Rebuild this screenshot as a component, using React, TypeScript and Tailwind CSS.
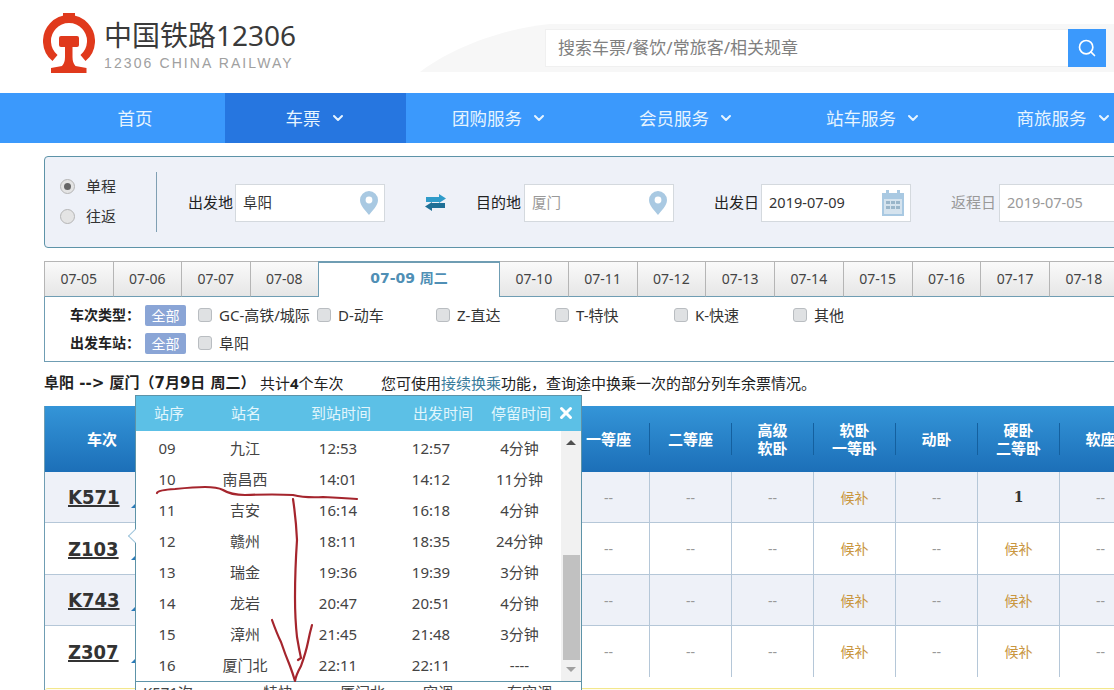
import { ChevronDown, Search, X } from "lucide-react";

const navItems = [
  { label: "首页", width: "w-[225px]", arrow: false },
  { label: "车票", width: "w-[181px]", arrow: true, active: true },
  { label: "团购服务", width: "w-[187px]", arrow: true },
  { label: "会员服务", width: "w-[187px]", arrow: true },
  { label: "站车服务", width: "w-[187px]", arrow: true },
  { label: "商旅服务", width: "w-[194px]", arrow: true },
];

const leftDates = ["07-05", "07-06", "07-07", "07-08"];
const rightDates = ["07-10", "07-11", "07-12", "07-13", "07-14", "07-15", "07-16", "07-17", "07-18"];

const trainTypes = ["GC-高铁/城际", "D-动车", "Z-直达", "T-特快", "K-快速", "其他"];

const seatHeaders = [
  ["一等座"],
  ["二等座"],
  ["高级", "软卧"],
  ["软卧", "一等卧"],
  ["动卧"],
  ["硬卧", "二等卧"],
  ["软座"],
];

const trains = [
  { code: "K571", soft: "候补", hard: "1", height: "h-[51px]", stripe: true },
  { code: "Z103", soft: "候补", hard: "候补", height: "h-[52px]", stripe: false },
  { code: "K743", soft: "候补", hard: "候补", height: "h-[51px]", stripe: true },
  { code: "Z307", soft: "候补", hard: "候补", height: "h-[51px]", stripe: false },
];

const stops = [
  ["09", "九江", "12:53", "12:57", "4分钟"],
  ["10", "南昌西", "14:01", "14:12", "11分钟"],
  ["11", "吉安", "16:14", "16:18", "4分钟"],
  ["12", "赣州", "18:11", "18:35", "24分钟"],
  ["13", "瑞金", "19:36", "19:39", "3分钟"],
  ["14", "龙岩", "20:47", "20:51", "4分钟"],
  ["15", "漳州", "21:45", "21:48", "3分钟"],
  ["16", "厦门北", "22:11", "22:11", "----"],
];

function Logo() {
  return (
    <svg viewBox="0 0 52 60" className="w-[52px] h-[60px] shrink-0">
      <path d="M12 45A22 22 0 1 1 40 45" fill="none" stroke="#e0391c" strokeWidth="8" />
      <path d="M20 0h12v5H20z" fill="#e0391c" />
      <path
        d="M18 23h16a2 2 0 0 1 2 2v7a2 2 0 0 1-2 2h-4.5v10q0 6 3 9l11 2v5H8v-5l11-2q3-3 3-9V34h-4a2 2 0 0 1-2-2v-7a2 2 0 0 1 2-2z"
        fill="#e0391c"
      />
    </svg>
  );
}

function Pin() {
  return (
    <svg viewBox="0 0 20 26" className="w-[20px] h-[26px]">
      <path d="M10 1a9 9 0 0 0-9 9c0 6 6 11 9 15 3-4 9-9 9-15a9 9 0 0 0-9-9z" fill="#a9c9e2" />
      <circle cx="10" cy="10" r="3.4" fill="#fff" />
    </svg>
  );
}

function CalendarIcon() {
  return (
    <svg viewBox="0 0 24 26" className="w-[24px] h-[26px]">
      <path d="M1 3h4V0h3v3h8V0h3v3h4v23H1z" fill="#a9c9e2" />
      <path d="M3 9h18v15H3z" fill="#d5e3ee" />
      <path d="M5 11h4v3H5zM10 11h4v3h-4zM15 11h4v3h-4zM5 16h4v3H5zM10 16h4v3h-4zM15 16h4v3h-4z" fill="#9ab6ca" />
    </svg>
  );
}

function SwapIcon() {
  return (
    <svg viewBox="0 0 21 17" className="w-[21px] h-[17px] block">
      <path d="M1 3h13V0l7 4.5L14 9V8H1z" fill="#2f9bc9" />
      <path d="M20 9v5H7v3L0 12.5 7 8v1z" fill="#1e6f96" />
    </svg>
  );
}

function Field({ value, muted, icon, width }: { value: string; muted?: boolean; icon?: React.ReactNode; width: string }) {
  return (
    <div className={`${width} h-[38px] mt-[2px] bg-white border border-[#d4d9de] flex items-center justify-between pl-[7px] pr-[5px] shrink-0`}>
      <span className={`text-[14.5px] ${muted ? "text-[#999]" : "text-[#333]"}`}>{value}</span>
      {icon}
    </div>
  );
}

function CheckItem({ label, width }: { label: string; width: string }) {
  return (
    <div className={`${width} flex items-center gap-[7px] shrink-0`}>
      <span className="w-[14px] h-[14px] rounded-[3px] bg-[#dfe1e3] border border-[#b9bdc1]" />
      <span className="text-[15px] text-[#333] leading-none">{label}</span>
    </div>
  );
}

function Corner() {
  return <span className="absolute left-[86px] bottom-[14px] w-0 h-0 border-b-[6px] border-l-[6px] border-b-[#2a7ab8] border-l-transparent" />;
}

export default function App() {
  return (
    <div className="relative w-[1114px] h-[690px] overflow-hidden bg-white text-[#333] font-['Noto_Sans','Noto_Sans_CJK_SC',sans-serif]">
      {/* Header */}
      <header className="relative h-[93px] flex items-start pl-[43px]">
        <svg viewBox="0 0 694 48" className="absolute left-[420px] top-[24px] w-[694px] h-[48px]">
          <path d="M0 48C30 25 80 5 130 0H694V48z" fill="#f7f7f7" />
        </svg>
        <div className="mt-[13px]">
          <Logo />
        </div>
        <div className="ml-[9px] mt-[17px]">
          <div className="text-[28px] leading-[36px] text-[#3a3a3a] whitespace-nowrap">中国铁路12306</div>
          <div className="mt-[1px] text-[14px] leading-[18px] tracking-[2.1px] text-[#a0a0a0] whitespace-nowrap font-['Liberation_Sans',sans-serif]">12306 CHINA RAILWAY</div>
        </div>
        <div className="relative ml-auto mr-[8px] mt-[29px] flex">
          <div className="w-[523px] h-[38px] bg-white border-y border-l border-[#f0f0f0] flex items-center pl-[12px] text-[17px] text-[#808080]">
            搜索车票/餐饮/常旅客/相关规章
          </div>
          <div className="w-[38px] h-[38px] bg-[#3b99fc] flex items-center justify-center">
            <Search className="w-[20px] h-[20px] text-white" strokeWidth={2} />
          </div>
        </div>
      </header>

      {/* Nav */}
      <nav className="flex h-[50px] bg-[#3b99fc]">
        {navItems.map((item) => (
          <div
            key={item.label}
            className={`${item.width} shrink-0 flex items-center justify-center gap-[9px] text-[17.5px] text-[#e6f4ff] ${item.active ? "bg-[#2676e0]" : ""} ${item.label === "首页" ? "pl-[45px]" : ""}`}
          >
            {item.label}
            {item.arrow && <ChevronDown className="w-[16px] h-[16px]" strokeWidth={3} />}
          </div>
        ))}
      </nav>

      <main className="ml-[44px] w-[1200px]">
        {/* Query panel */}
        <section className="mt-[13px] h-[92px] bg-[#eef1f8] border border-[#5d93a8] rounded-[4px] flex items-center">
          <div className="w-[112px] pl-[15px] pb-[2px] h-[60px] border-r border-[#7f9fb3] flex flex-col justify-center gap-[10px] shrink-0">
            <label className="flex items-center gap-[11px] text-[15px] leading-[20px]">
              <span className="w-[15px] h-[15px] rounded-full bg-[#e4e4e4] border border-[#b5b5b5] flex items-center justify-center">
                <span className="w-[7px] h-[7px] rounded-full bg-[#666]" />
              </span>
              单程
            </label>
            <label className="flex items-center gap-[11px] text-[15px] leading-[20px]">
              <span className="w-[15px] h-[15px] rounded-full bg-[#e4e4e4] border border-[#b5b5b5]" />
              往返
            </label>
          </div>
          <span className="ml-[31px] mr-[2px] text-[15px] text-[#222] whitespace-nowrap">出发地</span>
          <Field value="阜阳" width="w-[150px]" icon={<Pin />} />
          <span className="ml-[40px]"><SwapIcon /></span>
          <span className="ml-[30px] mr-[3px] text-[15px] text-[#222] whitespace-nowrap">目的地</span>
          <Field value="厦门" muted width="w-[150px]" icon={<Pin />} />
          <span className="ml-[40px] mr-[2px] text-[15px] text-[#222] whitespace-nowrap">出发日</span>
          <Field value="2019-07-09" width="w-[150px]" icon={<CalendarIcon />} />
          <span className="ml-[40px] mr-[3px] text-[15px] text-[#999] whitespace-nowrap">返程日</span>
          <Field value="2019-07-05" muted width="w-[150px]" />
        </section>

        {/* Date tabs */}
        <div className="mt-[13px] h-[36px] flex items-stretch">
          {leftDates.map((d) => (
            <div key={d} className="w-[68.5px] shrink-0 pb-[1px] flex items-center justify-center text-[14px] text-[#444] bg-gradient-to-b from-[#fafafa] to-[#e6e6e6] border-t border-l border-b border-t-[#b5b5b5] border-l-[#b5b5b5] border-b-[#6f9db3]">
              {d}
            </div>
          ))}
          <div className="w-[182px] shrink-0 flex items-start justify-center pt-[5px] text-[14px] font-bold text-[#4f8fb5] bg-white border-t-2 border-x border-[#6f9db3] font-['DejaVu_Sans','Noto_Sans_CJK_SC',sans-serif]">
            07-09 周二
          </div>
          {rightDates.map((d) => (
            <div key={d} className="w-[68.75px] shrink-0 pb-[1px] flex items-center justify-center text-[14px] text-[#444] bg-gradient-to-b from-[#fafafa] to-[#e6e6e6] border-t border-r border-b border-t-[#b5b5b5] border-r-[#b5b5b5] border-b-[#6f9db3]">
              {d}
            </div>
          ))}
        </div>

        {/* Filters */}
        <section className="h-[65px] border-x border-b border-[#6f9db3] pl-[25px] pt-[7px] flex flex-col gap-[6px]">
          <div className="flex items-center h-[22px]">
            <span className="w-[75px] pb-[1px] text-[14px] font-bold text-[#222] shrink-0">车次类型：</span>
            <span className="w-[41px] h-[21px] mr-[12px] bg-[#8aa5d6] text-white text-[14px] flex items-center justify-center rounded-[2px] shrink-0">全部</span>
            {trainTypes.map((t) => (
              <CheckItem key={t} label={t} width="w-[119px]" />
            ))}
          </div>
          <div className="flex items-center h-[22px]">
            <span className="w-[75px] pb-[1px] text-[14px] font-bold text-[#222] shrink-0">出发车站：</span>
            <span className="w-[41px] h-[21px] mr-[12px] bg-[#8aa5d6] text-white text-[14px] flex items-center justify-center rounded-[2px] shrink-0">全部</span>
            <CheckItem label="阜阳" width="w-[119px]" />
          </div>
        </section>

        {/* Result summary */}
        <div className="mt-[11px] h-[20px] flex items-center text-[15px] text-[#222] whitespace-nowrap">
          <span className="w-[216px] font-bold font-['DejaVu_Sans','Noto_Sans_CJK_SC',sans-serif]">阜阳 --&gt; 厦门（7月9日 周二）</span>
          <span className="w-[83px]">共计<b>4</b>个车次</span>
          <span className="ml-[38px]">
            您可使用<span className="text-[#3b7c9c]">接续换乘</span>功能，查询途中换乘一次的部分列车余票情况。
          </span>
        </div>

        {/* Results table */}
        <section className="mt-[13px] border-l border-[#6f9db3]">
          <div className="h-[66px] flex items-center bg-gradient-to-b from-[#3495d8] to-[#1c6fb8] text-white text-[15px] font-bold">
            <div className="w-[523px] pl-[42px] shrink-0">车次</div>
            {seatHeaders.map((h) => (
              <div key={h[0]} className="w-[82px] h-[32px] shrink-0 border-r border-[#14609f] flex flex-col items-center justify-center leading-[18px]">
                {h.map((line) => (
                  <span key={line}>{line}</span>
                ))}
              </div>
            ))}
          </div>
          {trains.map((train) => (
            <div key={train.code} className={`${train.height} flex ${train.code === "Z307" ? "" : "border-b border-[#b5c7d8]"} ${train.stripe ? "bg-[#eef1f8]" : "bg-white"}`}>
              <div className="relative w-[523px] shrink-0 pl-[23px] flex items-center">
                <span className="text-[20px] font-bold underline text-[#333] font-['DejaVu_Sans_Condensed','DejaVu_Sans',sans-serif]">{train.code}</span>
                <Corner />
              </div>
              {seatHeaders.map((h, i) => {
                const value = i === 3 ? train.soft : i === 5 ? train.hard : "--";
                return (
                  <div
                    key={h[0]}
                    className={`w-[82px] shrink-0 border-r border-[#b5c7d8] flex items-center justify-center text-[14px] ${value === "候补" ? "text-[#c9963f]" : value === "1" ? "font-bold text-[#333] font-['DejaVu_Serif',serif]" : "text-[#999]"}`}
                  >
                    {value}
                  </div>
                );
              })}
            </div>
          ))}
          <div className="mt-[11px] h-[20px] bg-[#fffdf0] border-t border-[#f3e78c] rounded-t-[3px]" />
        </section>
      </main>

      {/* Stop list popup */}
      <div className="absolute left-[135px] top-[395px] w-[447px] h-[310px] bg-white border border-[#5d93a8]">
        <span className="absolute left-[-6px] top-[135px] w-[10px] h-[10px] rotate-45 bg-white border-l border-b border-[#9fc5dc]" />
        <div className="relative h-[35px] pb-[1px] bg-[#5cc0e6] flex items-center pl-[18px] text-[15px] text-[#e2f6fc] whitespace-nowrap">
          <span className="w-[30px]">站序</span>
          <span className="ml-[47px] w-[30px]">站名</span>
          <span className="ml-[50px] w-[60px]">到站时间</span>
          <span className="ml-[42px] w-[60px]">出发时间</span>
          <span className="ml-[18px] w-[60px]">停留时间</span>
          <X className="absolute left-[421px] top-[8px] w-[18px] h-[18px] text-white" strokeWidth={4} />
        </div>
        <div className="flex h-[251px] border-b border-[#5d93a8]">
          <div className="w-[425px] shrink-0 pt-[2px]">
            {stops.map((s) => (
              <div key={s[0]} className="h-[31px] grid grid-cols-[62px_94px_92px_94px_83px] items-center text-center text-[15px] text-[#444]">
                <span>{s[0]}</span>
                <span>{s[1]}</span>
                <span>{s[2]}</span>
                <span>{s[3]}</span>
                <span>{s[4]}</span>
              </div>
            ))}
          </div>
          <div className="w-[20px] shrink-0 bg-[#f1f1f1] flex flex-col items-center">
            <span className="mt-[9px] w-0 h-0 border-x-[5px] border-b-[5px] border-x-transparent border-b-[#505050]" />
            <span className="mt-[110px] w-[17px] h-[105px] bg-[#c1c1c1]" />
            <span className="mt-[7px] w-0 h-0 border-x-[5px] border-t-[5px] border-x-transparent border-t-[#a0a0a0]" />
          </div>
        </div>
        <div className="h-[20px] flex pl-[7px] items-start text-[15px] text-[#444] whitespace-nowrap leading-[20px]">
          <span className="w-[120px]">K571次</span>
          <span className="w-[77px]">特快</span>
          <span className="w-[83px]">厦门北</span>
          <span className="w-[84px]">空调</span>
          <span>有空调</span>
        </div>
      </div>

      {/* Hand drawn marks */}
      <svg viewBox="0 0 1114 690" className="absolute inset-0 w-[1114px] h-[690px] pointer-events-none">
        <g fill="none" stroke="#a5252d" strokeWidth="2.2" strokeLinecap="round" strokeLinejoin="round">
          <path d="M157 493q1-3 18-4 20-2 30-2 12 0 18 3 8 5 22 5 30-1 48 0 12 3 30 2 20 1 34 2" />
          <path d="M293 499q3 20 4 41-2 30-2 57 0 22 2 40 2 12 4 21l-3 2" />
          <path d="M272 620q5 14 9 22 4 12 9 24 3 8 5 15 1-6 6-15 5-14 7-24 2-10 4-17" />
        </g>
      </svg>
    </div>
  );
}
